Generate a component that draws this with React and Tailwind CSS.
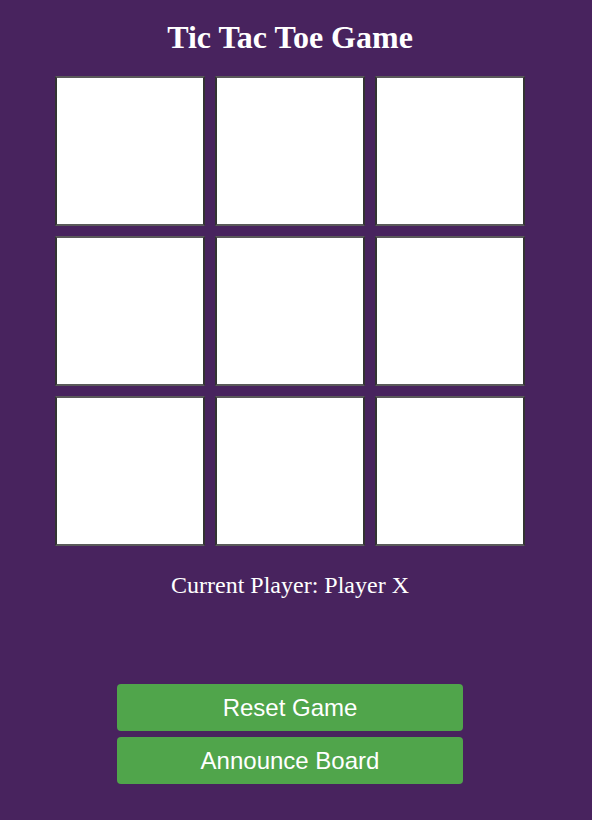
import { useState } from 'react';

export default function App() {
    const [cells, setCells] = useState(Array(9).fill(null));
    const [player, setPlayer] = useState('X');

    function play(i) {
        if (cells[i]) return;
        const next = cells.slice();
        next[i] = player;
        setCells(next);
        setPlayer(player === 'X' ? 'O' : 'X');
    }

    function reset() {
        setCells(Array(9).fill(null));
        setPlayer('X');
    }

    return (
        <div className="min-h-screen bg-[#48235e] text-white">
            <div className="w-[580px] flex flex-col items-center">
                <h1 className="mt-[19px] text-[32px] leading-[37px] font-bold font-['Liberation_Serif',serif]">
                    Tic Tac Toe Game
                </h1>
                <div className="mt-[20px] grid grid-cols-[150px_150px_150px] gap-[10px]">
                    {cells.map((c, i) => (
                        <button
                            key={i}
                            onClick={() => play(i)}
                            className="h-[150px] w-[150px] bg-white border-2 border-x-[#333] border-t-[#5a5a5a] border-b-[#5a5a5a] text-black text-5xl font-['Liberation_Sans',sans-serif]"
                        >
                            {c}
                        </button>
                    ))}
                </div>
                <p className="mt-[25px] text-[24px] leading-[28px] font-['Liberation_Serif',serif]">
                    Current Player: Player {player}
                </p>
                <div className="mt-[85px] flex flex-col gap-[6px] w-[346px]">
                    <button
                        onClick={reset}
                        className="h-[47px] rounded-[4px] bg-[#50a54b] text-white text-[24px] font-['Liberation_Sans',sans-serif]"
                    >
                        Reset Game
                    </button>
                    <button className="h-[47px] rounded-[4px] bg-[#50a54b] text-white text-[24px] font-['Liberation_Sans',sans-serif]">
                        Announce Board
                    </button>
                </div>
            </div>
        </div>
    );
}
